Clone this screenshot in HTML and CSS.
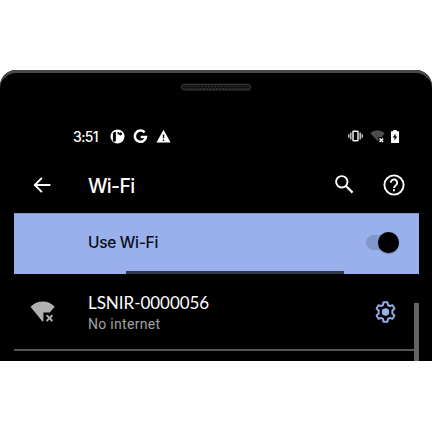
FILE: index.html
```html
<!DOCTYPE html>
<html lang="en">
<head>
<meta charset="utf-8">
<title>Wi-Fi</title>
<link rel="stylesheet" href="styles.css">
</head>
<body>
<main class="phone">
  <div class="speaker"><svg width="70" height="8" viewBox="0 0 70 8"><rect x=".7" y="1.4" width="68.6" height="5.5" rx="2.75" fill="#111" stroke="#353535" stroke-width="1.2"/><path d="M4 3.5H67M5.5 5.5H66" stroke="#3a3a3a" stroke-width="1" stroke-dasharray="1.3 2"/></svg></div>
  <header class="status">
    <span class="time">3:51</span>
    <svg class="app" width="15" height="15" viewBox="0 0 15 15"><circle cx="7.5" cy="7.5" r="7" fill="#fff"/><path d="M4.2 3.1h1.7v8.1a1.5 1.5 0 0 1-3 0V4.2Z" fill="#000"/><path d="M7.6 2.9h1.2v2.5H7.6z" fill="#000"/><circle cx="10.5" cy="4.8" r="1.6" fill="#000"/></svg>
    <svg class="google" width="15" height="15" viewBox="0 0 15 15"><path d="M11.6 3.4A5.6 5.6 0 1 0 13 8.1H7.7" fill="none" stroke="#fff" stroke-width="2.5"/></svg>
    <svg class="warning" width="15" height="15" viewBox="0 0 15 15"><path d="M7.5.8 14.6 13.6H.4Z" fill="#fff"/><path d="M7.5 5.4v3.8M7.5 10.5v1.6" stroke="#000" stroke-width="1.4"/></svg>
    <span class="spacer"></span>
    <svg class="vibrate" width="15" height="12" viewBox="0 0 15 12"><rect x="5" y="1.3" width="5" height="9.4" rx=".4" fill="none" stroke="#eee" stroke-width="1.5"/><path d="M2.8 2.6v6.8M12.2 2.6v6.8M.8 4.3v3.4M14.2 4.3v3.4" stroke="#ddd" stroke-width="1.3"/></svg>
    <svg class="nosignal" width="15" height="13" viewBox="0 0 15 13"><path d="M.1 3.1Q7.3-2.4 14.7 3.1L12 7H8.5V12Z" fill="#4b4b4b"/><path d="m9.6 8.5 3.5 3.5m0-3.5L9.6 12" stroke="#fff" stroke-width="1.5"/></svg>
    <svg class="battery" width="8" height="13" viewBox="0 0 8 13"><path d="M2.4 0h3.2v1.2H8V13H0V1.2h2.4Z" fill="#fff"/><path d="M4.5 3.4 1.6 7.6h1.9v3L6.4 6.4H4.5Z" fill="#000"/></svg>
  </header>
  <nav class="appbar">
    <svg class="back" width="18" height="16" viewBox="0 0 18 16"><path d="M8.9.8 1.8 8l7.1 7.2M1.8 8H17.4" fill="none" stroke="#fff" stroke-width="1.9"/></svg>
    <h1>Wi-Fi</h1>
    <span class="spacer"></span>
    <svg class="search" width="19" height="19" viewBox="0 0 19 19"><circle cx="6.8" cy="6.8" r="5.7" fill="none" stroke="#fff" stroke-width="1.9"/><path d="m11 11 6.6 6.6" stroke="#fff" stroke-width="2.2"/></svg>
    <svg class="help" width="22" height="22" viewBox="0 0 22 22"><circle cx="11" cy="11" r="9.6" fill="none" stroke="#fff" stroke-width="1.9"/><path d="M7.8 8.7a3.2 3.2 0 1 1 5.5 2.2C12.2 12 11 12.5 11 14M11 15.3v2" fill="none" stroke="#fff" stroke-width="1.9"/></svg>
  </nav>
  <section class="switchbar">
    <div class="switchrow"><span class="label">Use Wi-Fi</span><span class="switch"><i class="thumb"></i></span></div>
    <div class="progress"><div class="bar"></div></div>
  </section>
  <section class="network">
    <svg class="wifi" width="26" height="23" viewBox="0 0 26 23"><path d="M.5 6.7Q5.7 1.5 12.7 1.5T24.7 6.7L19.8 12.5H13.4V21.6H12.5Z" fill="#b1b1b1"/><path d="m16.6 15.2 5.8 5.8m0-5.8L16.6 21" stroke="#b1b1b1" stroke-width="1.9"/></svg>
    <div class="copy"><div class="name">LSNIR-0000056</div><div class="detail">No internet</div></div>
    <svg class="gear" width="24" height="24" viewBox="0 0 24 24"><path transform="translate(.5 0)" d="M10 2.2h4l.5 2.8q1 .4 1.8 1.1l2.7-1 2 3.5-2.2 1.8q.2 1.6 0 3.2l2.2 1.8-2 3.5-2.7-1q-.8.7-1.8 1.1l-.5 2.8h-4l-.5-2.8q-1-.4-1.8-1.1l-2.7 1-2-3.5 2.2-1.8q-.2-1.6 0-3.2L3 8.6l2-3.5 2.7 1Q8.5 5.4 9.5 5Z" fill="none" stroke="#99b0ed" stroke-width="1.9" stroke-linejoin="round"/><circle cx="12.5" cy="12" r="3.7" fill="#99b0ed"/></svg>
    <i class="scroll"></i>
  </section>
</main>
</body>
</html>
```
FILE: styles.css
```css
* { box-sizing: border-box; }
body { margin: 0; padding-top: 70px; width: 432px; height: 432px; overflow: hidden; background: #fff; font-family: Lato, sans-serif; }
svg { display: block; flex: none; }
.phone { position: relative; height: 291px; background: #000; color: #fff; border-radius: 16px 16px 0 0; box-shadow: inset 0 3px 0 #484848; overflow: hidden; display: flex; flex-direction: column; }
.speaker { height: 51px; padding: 13px 0 0 181px; flex: none; }
.status { height: 30px; flex: none; display: flex; align-items: center; padding: 0 33px 0 73px; }
.time { width: 37px; font: 500 14px/20px Inter, sans-serif; letter-spacing: -.65px; padding-top: 1px; }
.app { margin-right: 8px; }
.google { margin-right: 8px; }
.spacer { flex: 1; }
.vibrate { margin-right: 7px; }
.nosignal { margin-right: 6px; }
.appbar { height: 62px; flex: none; display: flex; align-items: center; padding: 5px 27px 0 33px; }
h1 { margin: 0 0 0 37px; font: 500 19.5px/26px Inter, sans-serif; letter-spacing: -.7px; padding-top: 2px; }
.search { margin-right: 29px; }
.switchbar { height: 61px; flex: none; margin: 0 13.5px 0 13.5px; background: #99b0ed; color: #0b0e14; display: flex; flex-direction: column; border-top: 1px solid #8296ca; }
.switchrow { height: 57px; display: flex; align-items: center; justify-content: space-between; padding: 0 20px 0 74.5px; }
.label { font: 500 15.5px/22px Inter, sans-serif; letter-spacing: -.3px; }
.switch { width: 33px; height: 15px; border-radius: 8px; background: #8297ca; display: flex; align-items: center; justify-content: flex-end; }
.thumb { width: 21px; height: 21px; border-radius: 50%; background: #000; box-shadow: 0 1px 1px #00000055; flex: none; }
.progress { height: 3px; padding-left: 112.5px; }
.bar { width: 218px; height: 3px; background: #303849; }
.network { position: relative; flex: none; height: 77px; margin: 0 13.5px; border-bottom: 2px solid #555; display: flex; align-items: center; padding: 0 21.5px 0 16.5px; }
.copy { margin-left: 32px; flex: 1; padding-top: 2px; }
.name { font: 400 17px/20px Lato, sans-serif; white-space: nowrap; letter-spacing: -.04px; }
.detail { font: 14px/18px Roboto, sans-serif; color: #a2a2a2; padding-top: 2px; letter-spacing: .3px; }
.scroll { position: absolute; right: 0; top: 29px; width: 4.5px; height: 60px; background: #646464; }
```
